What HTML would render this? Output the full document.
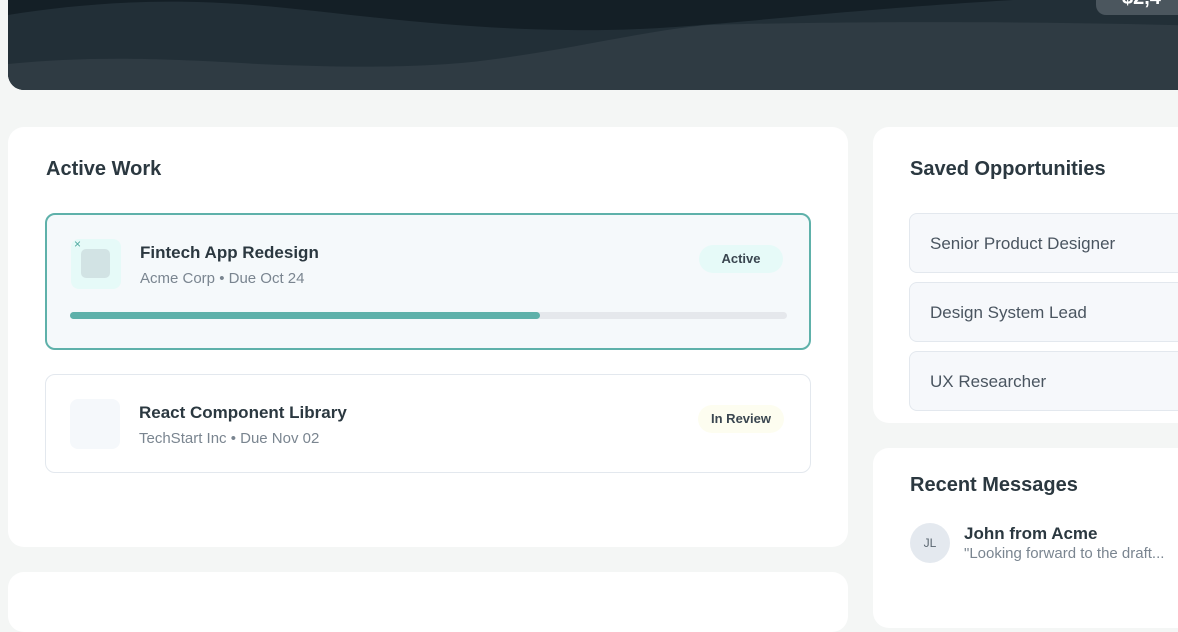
<!DOCTYPE html>
<html><head><meta charset="utf-8"><style>
*{box-sizing:border-box;margin:0;padding:0}
body{width:1178px;height:590px;overflow:hidden;background:#f4f6f5;font-family:"Liberation Sans",sans-serif;position:relative;color:#2b3840}
.hdr{position:absolute;left:8px;top:-20px;width:1200px;height:110px;border-radius:0 0 0 16px;overflow:hidden;background:#141f26}
.pill{position:absolute;left:1088px;top:8px;width:120px;height:27px;border-radius:10px;background:#4b565e;color:#fff;font-weight:bold;font-size:20px;padding:0 0 0 26px;line-height:20px}
.card{position:absolute;background:#fff;border-radius:16px}
h2{font-size:20px;font-weight:bold;color:#2b3840;position:absolute}
.job{position:absolute;left:37px;width:766px;border-radius:10px}
.ic{position:absolute;left:24px;width:50px;height:50px;border-radius:8px}
.t{position:absolute;left:93px;font-size:17px;font-weight:bold;color:#2b3840}
.s{position:absolute;left:93px;font-size:15px;color:#7a8590}
.badge{position:absolute;right:26px;height:28px;border-radius:14px;font-size:13px;font-weight:bold;color:#3a4650;text-align:center;line-height:28px}
.op{position:absolute;left:36px;width:300px;height:60px;border:1px solid #e3e8ee;border-radius:8px;background:#f6f8fb;font-size:17px;color:#4a5560;padding:20px 0 0 20px}
</style></head><body>
<div class="hdr">
<svg width="1200" height="110" style="position:absolute;left:0;top:0">
<path d="M0 35 C60 25 130 20 190 22 C300 25 400 48 560 50 C700 52 780 30 1100 15 L1200 15 L1200 110 L0 110Z" fill="#222f37"/>
<path d="M0 84 C80 76 150 78 250 84 C340 88 420 88 480 80 C560 70 640 50 700 45 C800 42 1000 40 1200 46 L1200 110 L0 110Z" fill="#2f3b43"/>
</svg>
<div class="pill">$2,4</div>
</div>

<div class="card" style="left:8px;top:127px;width:840px;height:420px">
<h2 style="left:38px;top:31px">Active Work</h2>
<div class="job" style="top:86px;height:137px;border:2px solid #5eb1aa;background:#f5f9fb">
<div class="ic" style="top:24px;background:#e6faf8"><div style="position:absolute;left:10px;top:10px;width:29px;height:29px;border-radius:5px;background:#d2e3e4"></div><span style="position:absolute;left:3px;top:-2px;color:#4fa9a0;font-size:12px">×</span></div>
<div class="t" style="top:28px">Fintech App Redesign</div>
<div class="s" style="top:55px">Acme Corp • Due Oct 24</div>
<div class="badge" style="top:30px;width:84px;background:#e6faf8">Active</div>
<div style="position:absolute;left:23px;top:97px;width:717px;height:7px;border-radius:4px;background:#e5e8ec"><div style="width:470px;height:7px;border-radius:4px;background:#5eb1aa"></div></div>
</div>
<div class="job" style="top:247px;height:99px;border:1px solid #e3e8ee;background:#fff">
<div class="ic" style="top:24px;left:24px;background:#f5f8fb"></div>
<div class="t" style="top:28px">React Component Library</div>
<div class="s" style="top:55px">TechStart Inc • Due Nov 02</div>
<div class="badge" style="top:30px;width:86px;background:#fdfdf0">In Review</div>
</div>
</div>
<div class="card" style="left:8px;top:572px;width:840px;height:60px"></div>

<div class="card" style="left:873px;top:127px;width:340px;height:296px">
<h2 style="left:37px;top:31px">Saved Opportunities</h2>
<div class="op" style="top:86px">Senior Product Designer</div>
<div class="op" style="top:155px">Design System Lead</div>
<div class="op" style="top:224px">UX Researcher</div>
</div>
<div class="card" style="left:873px;top:448px;width:340px;height:180px">
<h2 style="left:37px;top:26px">Recent Messages</h2>
<div style="position:absolute;left:37px;top:75px;width:40px;height:40px;border-radius:50%;background:#e4e9ef;color:#5a6670;font-size:12px;text-align:center;line-height:40px">JL</div>
<div style="position:absolute;left:91px;top:76px;font-size:17px;font-weight:bold">John from Acme</div>
<div style="position:absolute;left:91px;top:97px;font-size:15px;color:#7a8590;white-space:nowrap">"Looking forward to the draft...</div>
</div>
</body></html>
